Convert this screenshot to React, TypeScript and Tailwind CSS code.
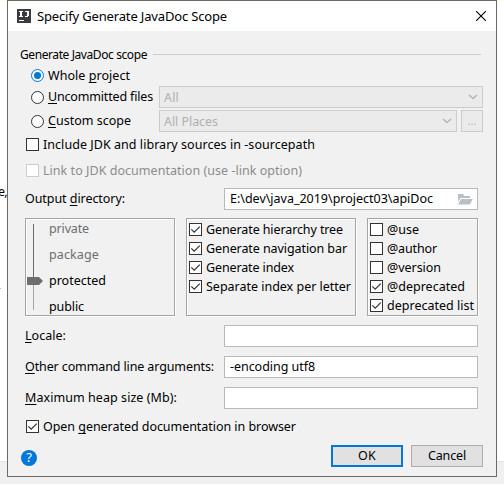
import React, { useLayoutEffect, useRef, useState } from "react";

type LabelProps = { text: string; w: number; hot?: number; className?: string };

// Single-line label fitted to a fixed advance width; `hot` is the index of its mnemonic.
function Label({ text, w, hot = -1, className = "" }: LabelProps) {
  const ref = useRef<HTMLSpanElement>(null);
  const [spacing, setSpacing] = useState(0);
  useLayoutEffect(() => {
    const fit = () => {
      const el = ref.current;
      if (!el) return;
      el.style.letterSpacing = "0px";
      const s = (w - el.getBoundingClientRect().width) / text.length;
      el.style.letterSpacing = `${s}px`;
      setSpacing(s);
    };
    fit();
    document.fonts.ready.then(fit);
  }, [text, w]);
  return (
    <span ref={ref} className={`inline-block shrink-0 whitespace-pre ${className}`} style={{ letterSpacing: spacing }}>
      {hot < 0 ? text : (
        <>
          {text.slice(0, hot)}
          <span className="underline decoration-1 underline-offset-2 [text-decoration-skip-ink:none]">{text[hot]}</span>
          {text.slice(hot + 1)}
        </>
      )}
    </span>
  );
}

function Check({ on = false, disabled = false }: { on?: boolean; disabled?: boolean }) {
  return (
    <span className={`block size-[13px] shrink-0 border bg-white ${disabled ? "border-[#cccccc]" : "border-[#333333]"}`}>
      {on && (
        <svg viewBox="0 0 11 11" className="block size-[11px]" fill="none" stroke="#333" strokeWidth="1.2">
          <path d="M1.3 5.3L4.2 8.2L9.8 2.6" />
        </svg>
      )}
    </span>
  );
}

function Radio({ on = false }: { on?: boolean }) {
  return (
    <svg viewBox="0 0 13 13" className="block size-[13px] shrink-0">
      <circle cx="6.5" cy="6.5" r="6" fill="#fff" stroke={on ? "#0078d7" : "#333"} />
      {on && <circle cx="6.5" cy="6.5" r="3.5" fill="#0078d7" />}
    </svg>
  );
}

function Combo({ text, w, className }: { text: string; w: number; className: string }) {
  return (
    <div className={`flex h-[22px] items-center justify-between border border-[#cccccc] bg-[#ebebeb] pr-1 pl-1 text-[#b0b0b0] ${className}`}>
      <Label text={text} w={w} className="pt-px" />
      <svg viewBox="0 0 10 6" className="h-[6px] w-[10px]" fill="none" stroke="#b4b4b4" strokeWidth="1.5">
        <path d="M1 1L5 4.5L9 1" />
      </svg>
    </div>
  );
}

function Field({ children }: { children?: React.ReactNode }) {
  return <div className="flex h-[22px] w-[254px] items-center justify-between border border-[#bababa] bg-white pr-1 pl-[5px]">{children}</div>;
}

const panel = "h-[98px] border border-[#a5a5a5] shadow-[1px_1px_0_#fff,inset_1px_1px_0_#fff]";

function CheckRow({ text, w, on }: { text: string; w: number; on?: boolean }) {
  return (
    <div className="flex h-[19px] items-center gap-1">
      <Check on={on} />
      <Label text={text} w={w} />
    </div>
  );
}

export default function App() {
  return (
    <div className="relative h-[484px] w-[504px] overflow-hidden bg-white font-['Noto_Sans','Open_Sans',sans-serif] text-[12.5px] leading-[18px] text-black">
      <div className="flex h-full flex-col">
        <div className="h-px bg-[#fffae3]" />
        <div className="flex-1 pt-[182px]">
          <Label text="e," w={9} className="-ml-[2px]" />
          <div className="mt-[87px] h-px w-px bg-[#8cc4f0]" />
        </div>
        <div className="h-[23px] border-t border-[#e2e2e2] bg-[#f0f0f0]" />
      </div>

      <div className="absolute top-0 left-[7px] flex h-[477px] w-[490px] flex-col border border-[#6c6a67] bg-[#f1f1f1]">
        <header className="flex h-[30px] shrink-0 items-center bg-white pr-[10px] pl-[9px]">
          <svg viewBox="0 0 14 14" className="-mt-px size-[14px] shrink-0" shapeRendering="crispEdges">
            <path d="M0 0H14V14H0Z" fill="#3b3b3f" />
            <path d="M2 2H6V3H5V7H6V8H2V7H3V3H2ZM8 2H12V7H11V8H8V7H10V3H8ZM2 11H7V12H2Z" fill="#fff" />
          </svg>
          <Label text="Specify Generate JavaDoc Scope" w={190} className="ml-1.5 text-[13px]" />
          <svg viewBox="0 0 10 10" className="-mt-px ml-auto size-[10px]" stroke="#000" strokeWidth="1.1">
            <path d="M0 0L10 10M10 0L0 10" />
          </svg>
        </header>

        <div className="mt-[13px] flex h-5 items-center pr-[15px] pl-3">
          <Label text="Generate JavaDoc scope" w={127} className="pt-px text-[12px]" />
          <div className="ml-[6px] h-px flex-1 bg-[#cccccc]" />
        </div>

        <div className="flex h-[22px] items-center gap-1 pt-px pl-[23px]">
          <Radio on />
          <Label text="Whole project" w={82} hot={6} />
        </div>
        <div className="flex h-[22px] items-center pl-[23px]">
          <div className="flex w-[128px] items-center gap-1"><Radio /><Label text="Uncommitted files" w={105} hot={0} /></div>
          <Combo text="All" w={15} className="w-[324px]" />
        </div>
        <div className="mt-0.5 flex h-[22px] items-center pl-[23px]">
          <div className="flex w-[128px] items-center gap-1"><Radio /><Label text="Custom scope" w={83} hot={0} /></div>
          <Combo text="All Places" w={54} className="w-[298px]" />
          <div className="ml-1 flex size-[22px] items-center justify-center border border-[#cccccc] bg-[#ebebeb] text-[11px] text-[#b0b0b0]">...</div>
        </div>

        <div className="flex h-[25px] items-center gap-1 pl-[18px]">
          <Check />
          <Label text="Include JDK and library sources in -sourcepath" w={272} />
        </div>
        <div className="flex h-[27px] items-center gap-1 pl-[18px] text-[#8c8c8c]">
          <Check disabled />
          <Label text="Link to JDK documentation (use -link option)" w={259} />
        </div>

        <div className="mt-1 flex h-[22px] items-center pl-[17px]">
          <div className="w-[199px]"><Label text="Output directory:" w={100} hot={7} /></div>
          <Field>
            <Label text="E:\dev\java_2019\project03\apiDoc" w={203} />
            <svg viewBox="0 0 16 12" className="h-3 w-4" fill="#b9c0c5">
              <path d="M1 9V1H5.8L7.5 3H13V5H3.5Z" />
              <path d="M4 6H15.8L13 11.5H1Z" />
            </svg>
          </Field>
        </div>

        <div className="mt-2 flex h-[98px] gap-[11px] pl-[17px]">
          <div className={`${panel} flex w-[150px] pt-0 pl-px`}>
            <svg viewBox="0 0 22 96" className="h-[96px] w-[22px]">
              <path d="M6 5H7V60H6Z" fill="#6e6e6e" />
              <path d="M6 60H7V91H6Z" fill="#a6a6a6" />
              <path d="M0 58H12L16 62L12 66H0Z" fill="#6e6e6e" />
            </svg>
            <div className="-mt-[3px] flex flex-col items-start *:h-[26px] *:leading-[26px]">
              <Label text="private" w={40} className="text-[#6e6e6e]" />
              <Label text="package" w={50} className="text-[#6e6e6e]" />
              <Label text="protected" w={57} />
              <Label text="public" w={35} />
            </div>
          </div>
          <div className={`${panel} w-[170px] pt-px pl-[2px]`}>
            <CheckRow on text="Generate hierarchy tree" w={137} />
            <CheckRow on text="Generate navigation bar" w={141} />
            <CheckRow on text="Generate index" w={88} />
            <CheckRow on text="Separate index per letter" w={145} />
          </div>
          <div className={`${panel} w-[111px] pt-px pl-[2px]`}>
            <CheckRow text="@use" w={32} />
            <CheckRow text="@author" w={50} />
            <CheckRow text="@version" w={54} />
            <CheckRow on text="@deprecated" w={78} />
            <CheckRow on text="deprecated list" w={87} />
          </div>
        </div>

        <div className="mt-[9px] flex flex-col gap-[9px] pl-[17px]">
          <div className="flex h-[22px] items-center">
            <div className="w-[199px]"><Label text="Locale:" w={41} hot={0} /></div>
            <Field />
          </div>
          <div className="flex h-[22px] items-center">
            <div className="w-[199px]"><Label text="Other command line arguments:" w={189} hot={0} /></div>
            <Field><Label text="-encoding utf8" w={85} /></Field>
          </div>
          <div className="flex h-[22px] items-center">
            <div className="w-[199px]"><Label text="Maximum heap size (Mb):" w={152} hot={0} /></div>
            <Field />
          </div>
        </div>

        <div className="flex h-[35px] items-center gap-1 pl-[18px]">
          <Check on />
          <Label text="Open generated documentation in browser" w={253} hot={5} />
        </div>

        <footer className="mt-px flex h-[22px] items-center pr-[13px] pl-[13px]">
          <div className="mt-[3px] flex size-4 items-center justify-center rounded-full bg-[#0078d7] text-[13px] leading-none text-white">?</div>
          <div className="ml-auto flex h-[22px] w-[72px] items-center justify-center border-2 border-[#0078d7] bg-[#e1e1e1]"><Label text="OK" w={18} /></div>
          <div className="ml-2 flex h-[22px] w-[72px] items-center justify-center border border-[#adadad] bg-[#e1e1e1]"><Label text="Cancel" w={38} /></div>
        </footer>
      </div>
    </div>
  );
}
